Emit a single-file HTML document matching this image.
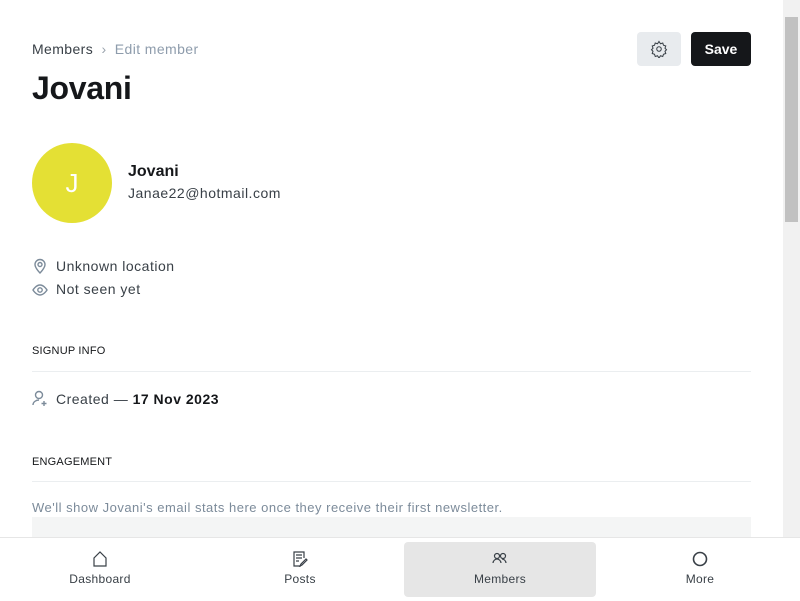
<!DOCTYPE html>
<html><head><style>
body{margin:0;width:800px;height:600px;overflow:hidden;font-family:"Liberation Sans",sans-serif;background:#fff;position:relative;color:#15171a}
.a{position:absolute}
.sb{position:absolute;right:0;top:0;width:17px;height:537px;background:#f1f1f1}
.th{position:absolute;right:2px;top:17px;width:13px;height:205px;background:#c1c1c1}
.t{font-size:14px;color:#394047;letter-spacing:0.5px}
svg{fill:none;stroke:#7c8b9a;stroke-width:1.4}
.nav{position:absolute;left:0;top:537px;width:800px;height:63px;border-top:1px solid #e6e6e6;background:#fff}
.ni{position:absolute;top:0;width:192px;height:63px;text-align:center;font-size:12px;color:#394047;letter-spacing:0.3px}
.ni span{position:absolute;left:0;right:0;top:34px}
.ni svg{position:absolute;left:88px;top:13px;stroke:#394047;stroke-width:1.2}
</style></head><body>
<div class="sb"><div class="th"></div></div>
<div class="a" style="left:32px;top:41px;font-size:14px;color:#394047;letter-spacing:0.4px">Members <span style="color:#9aa3ad;margin:0 4px">›</span> <span style="color:#8e9cac">Edit member</span></div>
<div class="a" style="left:637px;top:32px;width:44px;height:34px;background:#e8ebee;border-radius:4px"><svg width="18" height="18" viewBox="0 0 24 24" style="position:absolute;left:13px;top:8px;stroke:#394047"><circle cx="12" cy="12" r="3"/><path d="M12 2l2 3 3-1 1 3 3 1-1 3 2 2-2 2 1 3-3 1-1 3-3-1-2 3-2-3-3 1-1-3-3-1 1-3-2-2 2-2-1-3 3-1 1-3 3 1z"/></svg></div>
<div class="a" style="left:691px;top:32px;width:60px;height:34px;background:#15171a;border-radius:4px;color:#fff;font-weight:bold;font-size:14px;line-height:34px;text-align:center">Save</div>
<div class="a" style="left:32px;top:70px;font-size:32px;font-weight:bold;letter-spacing:-0.3px">Jovani</div>
<div class="a" style="left:32px;top:143px;width:80px;height:80px;border-radius:50%;background:#e4e034;color:#fff;font-size:26px;text-align:center;line-height:80px">J</div>
<div class="a" style="left:128px;top:163px;font-size:16px;font-weight:bold;color:#15171a">Jovani</div>
<div class="a t" style="left:128px;top:185px">Janae22@hotmail.com</div>
<svg class="a" style="left:32px;top:258px" width="16" height="16" viewBox="0 0 16 16"><path d="M8 15s5-5 5-8.5A5 5 0 0 0 3 6.5C3 10 8 15 8 15z"/><circle cx="8" cy="6.5" r="2"/></svg>
<div class="a t" style="left:56px;top:258px">Unknown location</div>
<svg class="a" style="left:32px;top:282px" width="16" height="16" viewBox="0 0 16 16"><path d="M1 8s3-5 7-5 7 5 7 5-3 5-7 5-7-5-7-5z"/><circle cx="8" cy="8" r="2.2"/></svg>
<div class="a t" style="left:56px;top:281px">Not seen yet</div>
<div class="a" style="left:32px;top:345px;font-size:11px;color:#15171a;letter-spacing:0.2px">SIGNUP INFO</div>
<div class="a" style="left:32px;top:371px;width:719px;height:1px;background:#ebeef0"></div>
<svg class="a" style="left:32px;top:390px" width="17" height="17" viewBox="0 0 17 17"><circle cx="7" cy="5" r="3.5"/><path d="M1 15c0-3 3-5 6-5M12 11v5M9.5 13.5h5"/></svg>
<div class="a t" style="left:56px;top:391px">Created — <b style="color:#15171a">17 Nov 2023</b></div>
<div class="a" style="left:32px;top:456px;font-size:11px;color:#15171a;letter-spacing:0.2px">ENGAGEMENT</div>
<div class="a" style="left:32px;top:481px;width:719px;height:1px;background:#ebeef0"></div>
<div class="a" style="left:32px;top:500px;font-size:13px;color:#7c8b9a;letter-spacing:0.5px">We'll show Jovani's email stats here once they receive their first newsletter.</div>
<div class="a" style="left:32px;top:517px;width:719px;height:20px;background:#f4f5f5"></div>
<div class="nav">
<div class="ni" style="left:4px"><svg width="16" height="16" viewBox="0 0 16 16"><path d="M2 15V7l6-6 6 6v8z"/></svg><span>Dashboard</span></div>
<div class="ni" style="left:204px"><svg width="16" height="16" viewBox="0 0 16 16"><path d="M9 15H2V1h10v6M4 4h6M4 7h6M4 10h3M14 8l-5 5-1 2 2-1 5-5z"/></svg><span>Posts</span></div>
<div class="ni" style="left:404px;top:4px;height:55px;background:#e6e6e6;border-radius:4px"><svg width="16" height="16" viewBox="0 0 16 16" style="top:9px"><circle cx="5" cy="5" r="2.5"/><circle cx="11" cy="5" r="2.5"/><path d="M1 12c0-2 2-4 4-4s4 2 4 4M10 8c2 0 4 2 4 4"/></svg><span style="top:30px">Members</span></div>
<div class="ni" style="left:604px"><svg width="16" height="16" viewBox="0 0 16 16" style="stroke-width:1.6"><circle cx="8" cy="8" r="6.5"/></svg><span>More</span></div>
</div>
</body></html>
